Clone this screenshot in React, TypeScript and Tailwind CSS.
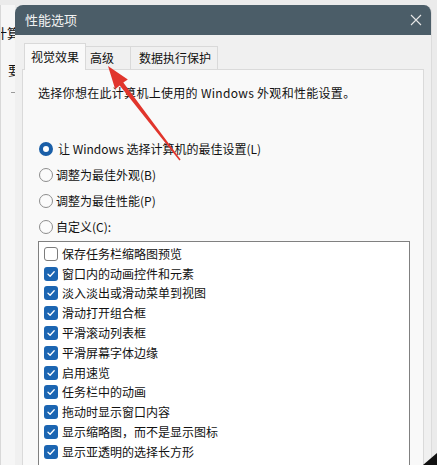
import React from 'react'

const cjk = { fontFamily: '"Noto Sans CJK SC", "Noto Sans", sans-serif' }

const radios = [
  { label: '让 Windows 选择计算机的最佳设置(L)', checked: true },
  { label: '调整为最佳外观(B)', checked: false },
  { label: '调整为最佳性能(P)', checked: false },
  { label: '自定义(C):', checked: false },
]

const options = [
  { label: '保存任务栏缩略图预览', checked: false },
  { label: '窗口内的动画控件和元素', checked: true },
  { label: '淡入淡出或滑动菜单到视图', checked: true },
  { label: '滑动打开组合框', checked: true },
  { label: '平滑滚动列表框', checked: true },
  { label: '平滑屏幕字体边缘', checked: true },
  { label: '启用速览', checked: true },
  { label: '任务栏中的动画', checked: true },
  { label: '拖动时显示窗口内容', checked: true },
  { label: '显示缩略图，而不是显示图标', checked: true },
  { label: '显示亚透明的选择长方形', checked: true },
]

function Radio({ checked }: { checked: boolean }) {
  if (checked) {
    return (
      <span className="w-[14px] h-[14px] rounded-full border-[4px] border-[#1a5fa8] bg-white shrink-0" />
    )
  }
  return <span className="w-[14px] h-[14px] rounded-full border border-[#8d8d8d] bg-[#fbfbfb] shrink-0" />
}

function Check({ checked }: { checked: boolean }) {
  if (!checked) {
    return <span className="w-[14px] h-[14px] rounded-[3px] border border-[#7c7c7c] bg-white shrink-0" />
  }
  return (
    <span className="w-[14px] h-[14px] rounded-[3px] bg-[#1b65b2] shrink-0 flex items-center justify-center">
      <svg width="10" height="10" viewBox="0 0 10 10" fill="none">
        <path d="M2 5.2 L4.1 7.2 L8.2 2.8" stroke="white" strokeWidth="1.3" strokeLinecap="round" strokeLinejoin="round" />
      </svg>
    </span>
  )
}

export default function App() {
  return (
    <div className="relative w-[437px] h-[465px] overflow-hidden bg-[#ebebeb] flex items-start text-[#111]" style={cjk}>
      {/* background window, mostly hidden */}
      <div className="w-[15px] h-[470px] shrink-0 mt-[5px] bg-[#f6f6f6] overflow-hidden flex flex-col text-[13px] leading-[16px] border-l border-[#d8d8d8]">
        <span className="mt-[20px] ml-[-7px] whitespace-nowrap">计算</span>
        <span className="mt-[21px] ml-[7px] whitespace-nowrap">要</span>
        <span className="mt-[14px] ml-[10px] w-[5px] h-px bg-[#9a9a9a]" />
      </div>

      {/* dialog */}
      <div className="w-[417px] h-[480px] shrink-0 mt-[5px] rounded-t-[8px] overflow-hidden flex flex-col bg-[#f0f0f0] border-r border-[#dcdcdc]">
        <div className="h-[30px] shrink-0 bg-[#4b5d68] flex items-center justify-between pl-[10px] pr-[8px]">
          <span className="text-[13px] text-[#f2f2f2]">性能选项</span>
          <svg width="12" height="12" viewBox="0 0 12 12" className="mr-[1px]">
            <path d="M1 1 L11 11 M11 1 L1 11" stroke="#e6e6e6" strokeWidth="1.1" />
          </svg>
        </div>

        <div className="flex flex-col px-[7px] pt-[8px] flex-1">
          {/* tabs */}
          <div className="flex items-end h-[26px] pl-[2px] text-[12px] leading-[16px]">
            <div className="h-[27px] px-[6px] pt-[5px] bg-[#f9f9f9] border border-b-0 border-[#d9d9d9] relative z-10 mb-[-1px] w-[62px]">
              视觉效果
            </div>
            <div className="h-[23px] px-[4px] pt-[3px] border border-b-0 border-l-0 border-[#d9d9d9] w-[45px]">
              高级
            </div>
            <div className="h-[23px] pl-[8px] pt-[3px] border border-b-0 border-l-0 border-[#d9d9d9] w-[87px]">
              数据执行保护
            </div>
          </div>

          {/* panel */}
          <div className="flex-1 bg-[#f9f9f9] border border-[#dadada] pl-[15px] pr-[13px] pt-[15px] flex flex-col text-[12px] leading-[16px]">
            <p className="tracking-[0.3px]">选择你想在此计算机上使用的 Windows 外观和性能设置。</p>

            <div className="mt-[35px] flex flex-col">
              {radios.map((r) => (
                <div key={r.label} className="h-[26px] flex items-center gap-[3px] pl-[1px]">
                  <Radio checked={r.checked} />
                  <span className={r.checked ? 'ml-[2px]' : ''}>{r.label}</span>
                </div>
              ))}
            </div>

            <div className="mt-[1px] bg-white border border-[#808080] pt-[2px] pl-[5px] flex-1 flex flex-col">
              {options.map((o) => (
                <div key={o.label} className="h-[19.8px] shrink-0 flex items-center gap-[4px]">
                  <Check checked={o.checked} />
                  <span>{o.label}</span>
                </div>
              ))}
            </div>
          </div>
        </div>
      </div>

      {/* red annotation arrow */}
      <svg className="absolute inset-0 pointer-events-none" width="437" height="465" viewBox="0 0 437 465">
        <polygon
          points="108,66 127.8,79.5 123.3,82.6 180.6,159.6 179.4,160.4 119.7,85.4 115.2,89.3"
          fill="#e1352c"
        />
      </svg>

      {/* corner shadow */}
      <svg className="absolute right-0 bottom-0 pointer-events-none" width="14" height="12" viewBox="0 0 14 12">
        <polygon points="14,0 14,12 0,12" fill="#111" />
      </svg>
    </div>
  )
}
